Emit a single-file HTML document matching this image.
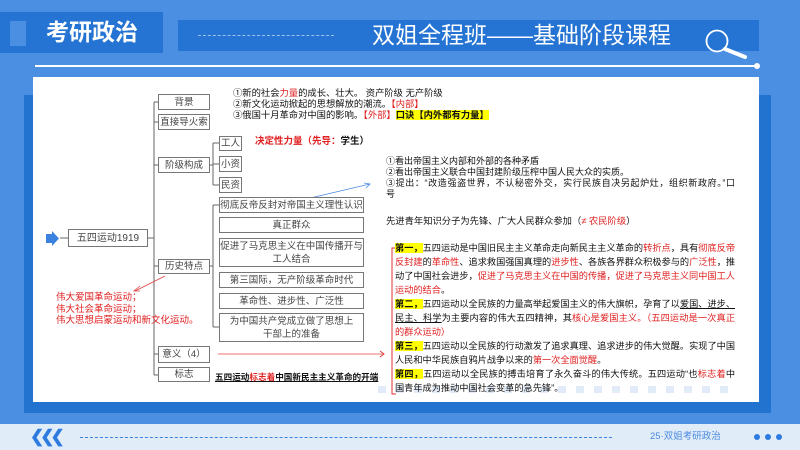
<!DOCTYPE html>
<html><head><meta charset="utf-8"><style>
*{margin:0;padding:0;box-sizing:border-box}
body{width:800px;height:450px;overflow:hidden;background:#4b8fe2;position:relative;font-family:"Liberation Sans","Noto Sans CJK SC",sans-serif;color:#222}
.a{position:absolute}
.box{position:absolute;border:1px solid #777;background:#fff;font-size:9.5px;color:#444;text-align:center;display:flex;align-items:center;justify-content:center;line-height:13px}
.t{position:absolute;font-size:9px;line-height:11px;white-space:nowrap;color:#111}
.r,.t .r,.t.r{color:#e02020}
.p{position:absolute;left:395px;width:340px;font-size:9.2px;line-height:14px;color:#111;white-space:nowrap}
.p div{text-align:justify;text-align-last:justify;height:14px}
.p div.l{text-align-last:left}
.y{background:#ffff00;font-weight:bold}
.rb{color:#e02020}
.j{display:block;width:349px;text-align:justify;text-align-last:justify}
</style></head><body>
<!-- header -->
<div class="a" style="left:0;top:12px;width:163px;height:41px;background:#2574d3"></div>
<div class="a" style="left:10px;top:21px;width:16px;height:25px;background:#4b8fe2"></div>
<div class="a" style="left:46px;top:17px;font-size:23px;color:#fff;font-weight:bold;line-height:30px">考研政治</div>
<div class="a" style="left:178px;top:20px;width:581px;height:31px;background:#2574d3"></div>
<div class="a" style="left:198px;top:35px;width:136px;border-top:1px dashed #9cc2f0"></div>
<div class="a" style="left:372px;top:20px;font-size:23px;color:#fff;line-height:31px">双姐全程班——基础阶段课程</div>
<svg class="a" style="left:700px;top:26px" width="50" height="36"><circle cx="17" cy="15" r="10.5" fill="none" stroke="#fff" stroke-width="1.8"/><line x1="25" y1="23" x2="45" y2="31" stroke="#fff" stroke-width="4" stroke-linecap="round"/></svg>
<div class="a" style="left:35px;top:65px;width:722px;height:2px;background:#fff"></div>
<div class="a" style="left:754px;top:63px;width:6px;height:6px;border-radius:3px;background:#fff"></div>
<!-- frame -->
<div class="a" style="left:24px;top:95px;width:747px;height:318px;background:#2272d0"></div>
<div class="a" style="left:33px;top:77px;width:726px;height:325px;background:#fff"></div>
<!-- footer -->
<div class="a" style="left:0;top:424px;width:800px;height:26px;background:#e1ecf9"></div>
<div class="a" style="left:30px;top:427px;font-size:17px;color:#2e7be0;font-weight:bold;letter-spacing:-4px;line-height:20px">❮❮❮</div>
<div class="a" style="left:80px;top:437px;width:532px;border-top:1.5px dashed #3b82e0"></div>
<div class="a" style="left:650px;top:431px;font-size:9.5px;color:#4a8be0;line-height:12px">25·双姐考研政治</div>
<div class="a" style="left:754px;top:434px;width:6px;height:6px;border-radius:3px;background:#2e7be0"></div>
<div class="a" style="left:765px;top:434px;width:6px;height:6px;border-radius:3px;background:#2e7be0"></div>
<div class="a" style="left:776px;top:434px;width:6px;height:6px;border-radius:3px;background:#2e7be0"></div>
<!-- faint squares -->
<div class="a" style="left:378px;top:386px;width:360px;height:7px;background:repeating-linear-gradient(90deg,#e2ecf8 0 8px,transparent 8px 18px)"></div>

<!-- mind map lines -->
<svg class="a" style="left:0;top:0" width="800" height="450">
<g stroke="#666" stroke-width="1" fill="none">
<line x1="148" y1="238" x2="154" y2="238"/>
<line x1="154" y1="102" x2="154" y2="375"/>
<line x1="154" y1="102" x2="158" y2="102"/><line x1="154" y1="122" x2="158" y2="122"/>
<line x1="154" y1="165" x2="158" y2="165"/><line x1="154" y1="266" x2="158" y2="266"/>
<line x1="154" y1="354" x2="158" y2="354"/><line x1="154" y1="375" x2="158" y2="375"/>
<line x1="210" y1="165" x2="213" y2="165"/>
<line x1="213" y1="143" x2="213" y2="185"/>
<line x1="213" y1="143" x2="219" y2="143"/><line x1="213" y1="164" x2="219" y2="164"/><line x1="213" y1="185" x2="219" y2="185"/>
<line x1="210" y1="266" x2="213" y2="266"/>
<line x1="213" y1="205" x2="213" y2="327"/>
<line x1="213" y1="205" x2="219" y2="205"/><line x1="213" y1="327" x2="219" y2="327"/>
<line x1="60" y1="238" x2="68" y2="238"/>
</g>
<polygon points="46,234 52,234 52,231 59,238.5 52,246 52,243 46,243" fill="#3b82e0"/>
<line x1="165" y1="276" x2="135" y2="291" stroke="#e04040" stroke-width="0.8"/>
<polyline points="140,286 134,291 140,291" fill="none" stroke="#e04040" stroke-width="0.8"/>
<line x1="306" y1="199" x2="370" y2="184" stroke="#4a8be0" stroke-width="0.8"/>
<polyline points="364,183 370,184 366,188" fill="none" stroke="#4a8be0" stroke-width="0.8"/>
<line x1="218" y1="354" x2="384" y2="354" stroke="#f07070" stroke-width="1"/>
<polyline points="380,351 384,354 380,357" fill="none" stroke="#e04040" stroke-width="1"/>
<polyline points="396,248 392,248 392,394 396,394" fill="none" stroke="#e03030" stroke-width="1"/>
</svg>

<div class="box" style="left:158px;top:94px;width:52px;height:16px">背景</div>
<div class="box" style="left:158px;top:114px;width:52px;height:16px">直接导火索</div>
<div class="box" style="left:158px;top:157px;width:52px;height:16px">阶级构成</div>
<div class="box" style="left:219px;top:136px;width:23px;height:15px">工人</div>
<div class="box" style="left:219px;top:156px;width:23px;height:16px">小资</div>
<div class="box" style="left:219px;top:177px;width:23px;height:16px">民资</div>
<div class="box" style="left:219px;top:197px;width:145px;height:16px">彻底反帝反封对帝国主义理性认识</div>
<div class="box" style="left:219px;top:217px;width:145px;height:16px">真正群众</div>
<div class="box" style="left:219px;top:238px;width:145px;height:29px">促进了马克思主义在中国传播开与<br>工人结合</div>
<div class="box" style="left:219px;top:272px;width:145px;height:16px">第三国际，无产阶级革命时代</div>
<div class="box" style="left:219px;top:293px;width:145px;height:16px">革命性、进步性、广泛性</div>
<div class="box" style="left:219px;top:313px;width:145px;height:29px">为中国共产党成立做了思想上<br>干部上的准备</div>
<div class="box" style="left:158px;top:259px;width:52px;height:15px">历史特点</div>
<div class="box" style="left:68px;top:229px;width:80px;height:18px;font-size:10px">五四运动1919</div>
<div class="box" style="left:158px;top:346px;width:52px;height:17px">意义（4）</div>
<div class="box" style="left:158px;top:367px;width:52px;height:15px">标志</div>

<div class="t r" style="left:56px;top:292px;font-size:9.5px;line-height:11.5px">伟大爱国革命运动；<br>伟大社会革命运动；<br>伟大思想启蒙运动和新文化运动。</div>

<div class="t" style="left:233px;top:88px;font-size:9.3px">①新的社会<span class="r">力量</span>的成长、壮大。 资产阶级 无产阶级<br>②新文化运动掀起的思想解放的潮流。<span class="r">【内部】</span><br>③俄国十月革命对中国的影响。<span class="r">【外部】</span><span class="y">口诀【内外都有力量】</span></div>
<div class="t" style="left:255px;top:136px;font-size:9.5px;font-weight:bold"><span class="r">决定性力量（先导：</span>学生）</div>
<div class="t" style="left:386px;top:156px;font-size:9px">①看出帝国主义内部和外部的各种矛盾<br>②看出帝国主义联合中国封建阶级压榨中国人民大众的实质。<br><span class="j">③提出：“改造强盗世界，不认秘密外交，实行民族自决另起炉灶，组织新政府。”口</span>号</div>
<div class="t" style="left:386px;top:216px;font-size:9.3px">先进青年知识分子为先锋、广大人民群众参加（<span class="r">≠ 农民阶级</span>）</div>
<div class="t" style="left:215px;top:372px;font-size:8.6px;font-weight:bold;text-decoration:underline">五四运动<span class="r">标志着</span>中国新民主主义革命的开端</div>

<div class="p" style="top:241px">
<div><span class="y">第一，</span>五四运动是中国旧民主主义革命走向新民主主义革命的<span class="rb">转折点</span>，具有<span class="rb">彻底反帝</span></div>
<div><span class="rb">反封建</span>的<span class="rb">革命性</span>、追求救国强国真理的<span class="rb">进步性</span>、各族各界群众积极参与的<span class="rb">广泛性</span>，推</div>
<div>动了中国社会进步，<span class="rb">促进了马克思主义在中国的传播，促进了马克思主义同中国工人</span></div>
<div class="l"><span class="rb">运动的结合</span>。</div>
<div><span class="y">第二，</span>五四运动以全民族的力量高举起爱国主义的伟大旗帜，孕育了以<u>爱国、进步、</u></div>
<div><u>民主、科学</u>为主要内容的伟大五四精神，其<span class="rb">核心是爱国主义。（五四运动是一次真正</span></div>
<div class="l"><span class="rb">的群众运动）</span></div>
<div><span class="y">第三，</span>五四运动以全民族的行动激发了追求真理、追求进步的伟大觉醒。实现了中国</div>
<div class="l">人民和中华民族自鸦片战争以来的<span class="rb">第一次全面觉醒</span>。</div>
<div><span class="y">第四，</span>五四运动以全民族的搏击培育了永久奋斗的伟大传统。五四运动“也<span class="rb">标志着</span>中</div>
<div class="l">国青年成为推动中国社会变革的急先锋”。</div>
</div>
</body></html>
